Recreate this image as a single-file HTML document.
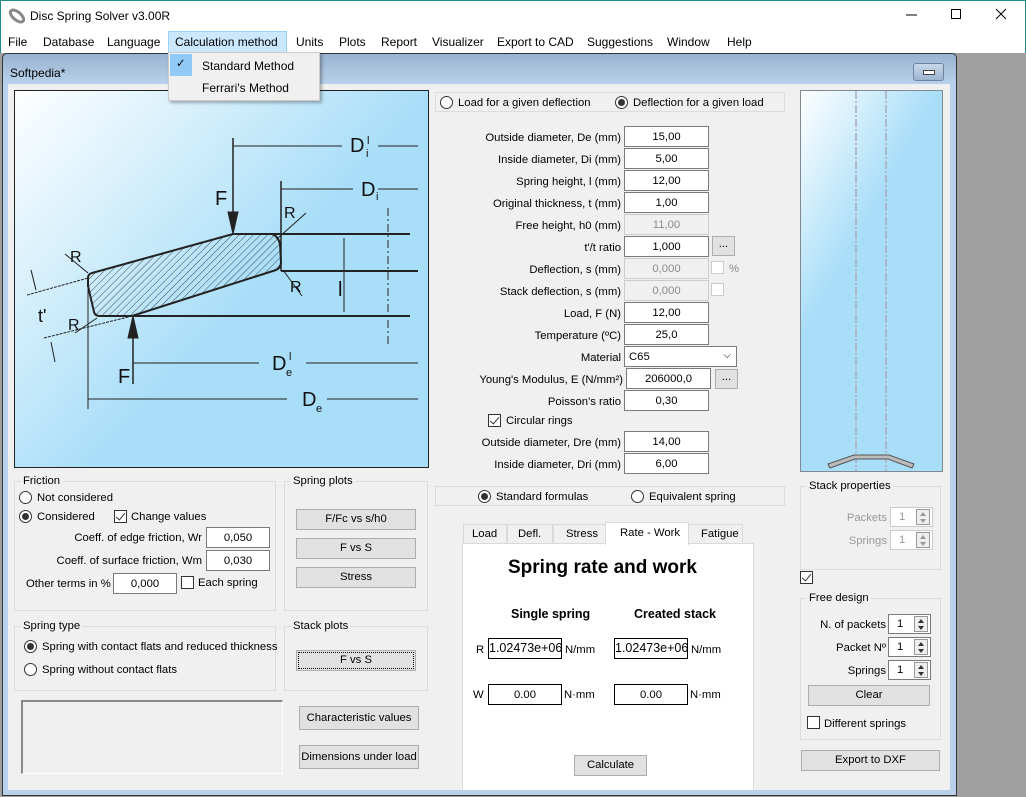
<!DOCTYPE html>
<html><head><meta charset="utf-8"><style>
*{box-sizing:border-box;margin:0;padding:0}
body{width:1026px;height:797px;position:relative;overflow:hidden;background:#a0a0a0;font-family:"Liberation Sans",sans-serif;font-size:11.3px;color:#000}
.a{position:absolute}
.t{position:absolute;white-space:nowrap;line-height:14px}
.r{text-align:right}
.in{position:absolute;background:#fff;border:1px solid #7a7a7a;height:21px;text-align:center;line-height:20px;white-space:nowrap}
.dis{background:#f0f0f0;border-color:#ccc;color:#8a8a8a}
.btn{position:absolute;background:#e1e1e1;border:1px solid #adadad;text-align:center;line-height:18px;height:21px;white-space:nowrap}
.grp{position:absolute;border:1px solid #dcdcdc}
.gl{position:absolute;top:-8px;left:6px;background:#f0f0f0;padding:0 2px;line-height:14px;white-space:nowrap}
.rad{position:absolute;width:13px;height:13px;border:1px solid #333;border-radius:50%;background:#fff}
.rad.on::after{content:"";position:absolute;left:2px;top:2px;width:7px;height:7px;border-radius:50%;background:#333}
.chk{position:absolute;width:13px;height:13px;border:1px solid #333;background:#fff}
.chk.on::after{content:"";position:absolute;left:3px;top:0px;width:4px;height:8px;border:solid #333;border-width:0 1.5px 1.5px 0;transform:rotate(40deg)}
.spin{position:absolute;width:43px;height:20px;background:#fff;border:1px solid #7a7a7a;line-height:18px;padding-left:8px}
.spin i{position:absolute;right:2px;top:1px;width:14px;height:16px;border:1px solid #999;background:#eee}
.spin i::before{content:"";position:absolute;left:3px;top:2px;border:3px solid transparent;border-bottom:4px solid #333;border-top:0}
.spin i::after{content:"";position:absolute;left:3px;top:9px;border:3px solid transparent;border-top:4px solid #333;border-bottom:0}
.spin.d{color:#999;border-color:#ccc}
.spin.d i::before{border-bottom-color:#999}.spin.d i::after{border-top-color:#999}
</style></head><body>
<div class="a" style="left:0;top:0;width:1026px;height:53px;background:#fff;border:1px solid #1e8c8c;border-bottom:none"></div>
<svg class="a" style="left:8px;top:7px" width="18" height="18"><ellipse cx="9" cy="9" rx="8" ry="4" transform="rotate(40 9 9)" fill="none" stroke="#888" stroke-width="3"/></svg>
<div class="t" style="left:30px;top:9px;font-size:12px">Disc Spring Solver v3.00R</div>
<svg class="a" style="left:900px;top:5px" width="120" height="20"><line x1="6" y1="10" x2="17" y2="10" stroke="#000"/><rect x="51.5" y="4.5" width="9" height="9" fill="none" stroke="#000"/><path d="M96 4L106 14M106 4L96 14" stroke="#000"/></svg>
<div class="a" style="left:168px;top:31px;width:119px;height:22px;background:#cce8ff;border:1px solid #99d1ff"></div>
<div class="t" style="top:35px;left:8px;font-size:12px">File</div>
<div class="t" style="top:35px;left:43px;font-size:12px">Database</div>
<div class="t" style="top:35px;left:107px;font-size:12px">Language</div>
<div class="t" style="top:35px;left:175px;font-size:12px">Calculation method</div>
<div class="t" style="top:35px;left:296px;font-size:12px">Units</div>
<div class="t" style="top:35px;left:339px;font-size:12px">Plots</div>
<div class="t" style="top:35px;left:381px;font-size:12px">Report</div>
<div class="t" style="top:35px;left:432px;font-size:12px">Visualizer</div>
<div class="t" style="top:35px;left:497px;font-size:12px">Export to CAD</div>
<div class="t" style="top:35px;left:587px;font-size:12px">Suggestions</div>
<div class="t" style="top:35px;left:667px;font-size:12px">Window</div>
<div class="t" style="top:35px;left:727px;font-size:12px">Help</div>
<div class="a" style="left:2px;top:53px;width:955px;height:743px;background:linear-gradient(#98b3d0,#b9d1ea 30px);border:1px solid #333;border-radius:5px 5px 0 0"></div>
<div class="t" style="left:10px;top:66px;font-size:12px">Softpedia*</div>
<div class="a" style="left:913px;top:63px;width:31px;height:18px;border:1px solid #6d83a0;border-radius:3px;background:linear-gradient(#c8d8ea,#9db4cf)"><div class="a" style="left:9px;top:6px;width:12px;height:5px;background:#fff;border:1px solid #444"></div></div>
<div class="a" style="left:8px;top:84px;width:942px;height:706px;background:#f0f0f0"></div>
<svg class="a" style="left:14px;top:90px" width="416" height="379" viewBox="14 90 416 379">
<defs><linearGradient id="g" x1="0" y1="0" x2="0.6" y2="0.5"><stop offset="0" stop-color="#fff"/><stop offset="1" stop-color="#a9def8"/></linearGradient>
<pattern id="h" width="5" height="5" patternUnits="userSpaceOnUse" patternTransform="rotate(45)"><line x1="0" y1="0" x2="0" y2="5" stroke="#222" stroke-width="0.8"/></pattern></defs>
<rect x="14.5" y="90.5" width="414" height="377" fill="url(#g)" stroke="#222"/>
<g stroke="#222" fill="none" stroke-width="1">
<path d="M88 278 Q88 274 92 273 L233 234 L272 234 Q278 236 280 244 L281 262 Q281 268 276 270 L132 316 L100 316 Q95 316 94 312 L88 286Z" fill="url(#h)" stroke-width="2"/>
<line x1="233" y1="234" x2="410" y2="234" stroke-width="2"/><line x1="281" y1="271" x2="418" y2="271" stroke-width="2"/><line x1="100" y1="316" x2="410" y2="316" stroke-width="2"/>
<line x1="233" y1="138" x2="233" y2="222" stroke-width="1.5"/><path d="M228 212L233 234L238 212Z" fill="#222"/>
<line x1="233" y1="146" x2="342" y2="146"/><line x1="378" y1="146" x2="418" y2="146"/>
<line x1="281" y1="181" x2="281" y2="271" stroke-width="1.5"/>
<line x1="281" y1="189" x2="353" y2="189"/><line x1="378" y1="189" x2="418" y2="189"/>
<line x1="133" y1="330" x2="133" y2="384" stroke-width="1.5"/><path d="M128 338L133 316L138 338Z" fill="#222"/>
<line x1="133" y1="363" x2="259" y2="363"/><line x1="306" y1="363" x2="418" y2="363"/>
<line x1="88" y1="280" x2="88" y2="409"/><line x1="88" y1="399" x2="287" y2="399"/><line x1="327" y1="399" x2="418" y2="399"/>
<line x1="388" y1="208" x2="388" y2="345" stroke-dasharray="8 3 2 3"/>
<line x1="344" y1="238" x2="344" y2="312"/>
<line x1="27" y1="295" x2="88" y2="278" stroke-dasharray="3 1"/><line x1="44" y1="338" x2="132" y2="316" stroke-dasharray="3 1"/>
<line x1="65" y1="254" x2="88" y2="273"/><line x1="75" y1="333" x2="97" y2="318"/><line x1="278" y1="238" x2="306" y2="213"/><line x1="283" y1="270" x2="302" y2="296"/>
<line x1="31" y1="270" x2="36" y2="290"/><line x1="51" y1="342" x2="55" y2="362"/>
</g>
<g font-family="Liberation Sans" font-size="20" fill="#111">
<text x="215" y="205">F</text><text x="118" y="383">F</text>
<text x="350" y="152">D</text><text x="366" y="157" font-size="11">i</text><text x="367" y="144" font-size="11">l</text>
<text x="361" y="196">D</text><text x="376" y="200" font-size="11">i</text>
<text x="272" y="370">D</text><text x="286" y="376" font-size="11">e</text><text x="289" y="360" font-size="11">l</text>
<text x="302" y="406">D</text><text x="316" y="412" font-size="11">e</text>
<text x="338" y="296">l</text><text x="38" y="322" font-size="18">t'</text>
<text x="70" y="262" font-size="16">R</text><text x="68" y="330" font-size="16">R</text><text x="284" y="218" font-size="16">R</text><text x="290" y="292" font-size="16">R</text>
</g></svg>
<div class="a" style="left:168px;top:52px;width:152px;height:49px;background:#f0f0f0;border:1px solid #ccc;box-shadow:2px 2px 3px rgba(0,0,0,.3)"></div>
<div class="a" style="left:170px;top:54px;width:22px;height:22px;background:#91c9f7"></div>
<div class="t" style="left:176px;top:57px">✓</div>
<div class="t" style="left:202px;top:59px;font-size:12px">Standard Method</div>
<div class="t" style="left:202px;top:81px;font-size:12px">Ferrari's Method</div>
<div class="grp" style="left:435px;top:92px;width:350px;height:20px"></div>
<div class="rad" style="left:440px;top:96px"></div><div class="t" style="left:458px;top:96px">Load for a given deflection</div>
<div class="rad on" style="left:615px;top:96px"></div><div class="t" style="left:633px;top:96px">Deflection for a given load</div>
<div class="t r" style="right:405px;top:131px">Outside diameter, De (mm)</div><div class="in" style="left:624px;top:126px;width:85px">15,00</div>
<div class="t r" style="right:405px;top:153px">Inside diameter, Di (mm)</div><div class="in" style="left:624px;top:148px;width:85px">5,00</div>
<div class="t r" style="right:405px;top:175px">Spring height, l (mm)</div><div class="in" style="left:624px;top:170px;width:85px">12,00</div>
<div class="t r" style="right:405px;top:197px">Original thickness, t (mm)</div><div class="in" style="left:624px;top:192px;width:85px">1,00</div>
<div class="t r" style="right:405px;top:219px">Free height, h0 (mm)</div><div class="in dis" style="left:624px;top:214px;width:85px">11,00</div>
<div class="t r" style="right:405px;top:241px">t'/t ratio</div><div class="in" style="left:624px;top:236px;width:85px">1,000</div><div class="btn" style="left:712px;top:236px;width:23px;height:20px;line-height:14px">...</div>
<div class="t r" style="right:405px;top:263px">Deflection, s (mm)</div><div class="in dis" style="left:624px;top:258px;width:85px">0,000</div><div class="chk" style="left:711px;top:261px;border-color:#ccc"></div><div class="t" style="left:729px;top:262px;color:#888">%</div>
<div class="t r" style="right:405px;top:285px">Stack deflection, s (mm)</div><div class="in dis" style="left:624px;top:280px;width:85px">0,000</div><div class="chk" style="left:711px;top:283px;border-color:#ccc"></div>
<div class="t r" style="right:405px;top:307px">Load, F (N)</div><div class="in" style="left:624px;top:302px;width:85px">12,00</div>
<div class="t r" style="right:405px;top:329px">Temperature (ºC)</div><div class="in" style="left:624px;top:324px;width:85px">25,0</div>
<div class="t r" style="right:405px;top:351px">Material</div><div class="in" style="left:624px;top:346px;width:113px;text-align:left;padding-left:4px">C65<span style="position:absolute;right:5px;top:-1px;font-size:10px">⌵</span></div>
<div class="t r" style="right:403px;top:373px">Young's Modulus, E (N/mm²)</div><div class="in" style="left:626px;top:368px;width:85px">206000,0</div><div class="btn" style="left:715px;top:369px;width:23px;height:20px;line-height:14px">...</div>
<div class="t r" style="right:405px;top:395px">Poisson's ratio</div><div class="in" style="left:624px;top:390px;width:85px">0,30</div>
<div class="chk on" style="left:488px;top:414px"></div><div class="t" style="left:506px;top:414px">Circular rings</div>
<div class="t r" style="right:405px;top:436px">Outside diameter, Dre (mm)</div><div class="in" style="left:624px;top:431px;width:85px">14,00</div>
<div class="t r" style="right:405px;top:458px">Inside diameter, Dri (mm)</div><div class="in" style="left:624px;top:453px;width:85px">6,00</div>
<div class="grp" style="left:435px;top:486px;width:350px;height:20px"></div>
<div class="rad on" style="left:478px;top:490px"></div><div class="t" style="left:496px;top:490px">Standard formulas</div>
<div class="rad" style="left:631px;top:490px"></div><div class="t" style="left:649px;top:490px">Equivalent spring</div>
<div class="a" style="left:462px;top:543px;width:292px;height:247px;background:#fff;border:1px solid #d9d9d9;border-bottom:none"></div>
<div class="a" style="left:463px;top:524px;width:44px;height:20px;border:1px solid #d9d9d9;background:#f0f0f0"></div><div class="t" style="left:472px;top:527px">Load</div>
<div class="a" style="left:507px;top:524px;width:46px;height:20px;border:1px solid #d9d9d9;background:#f0f0f0"></div><div class="t" style="left:518px;top:527px">Defl.</div>
<div class="a" style="left:553px;top:524px;width:53px;height:20px;border:1px solid #d9d9d9;background:#f0f0f0"></div><div class="t" style="left:566px;top:527px">Stress</div>
<div class="a" style="left:688px;top:524px;width:55px;height:20px;border:1px solid #d9d9d9;background:#f0f0f0"></div><div class="t" style="left:701px;top:527px">Fatigue</div>
<div class="a" style="left:605px;top:522px;width:84px;height:23px;border:1px solid #d9d9d9;border-bottom:none;background:#fff"></div><div class="t" style="left:620px;top:526px">Rate - Work</div>
<div class="t" style="left:508px;top:558px;font-size:19px;font-weight:bold;line-height:20px">Spring rate and work</div>
<div class="t" style="left:511px;top:607px;font-weight:bold;font-size:12.5px">Single spring</div>
<div class="t" style="left:634px;top:607px;font-weight:bold;font-size:12.5px">Created stack</div>
<div class="t" style="left:476px;top:643px">R</div>
<div class="in" style="left:488px;top:638px;width:74px;border-color:#000;font-size:12.5px;line-height:18px;overflow:hidden">1.02473e+06</div><div class="t" style="left:565px;top:643px">N/mm</div>
<div class="in" style="left:614px;top:638px;width:74px;border-color:#000;font-size:12.5px;line-height:18px;overflow:hidden">1.02473e+06</div><div class="t" style="left:691px;top:643px">N/mm</div>
<div class="t" style="left:473px;top:688px">W</div>
<div class="in" style="left:488px;top:684px;width:74px;border-color:#000">0.00</div><div class="t" style="left:564px;top:688px">N·mm</div>
<div class="in" style="left:614px;top:684px;width:74px;border-color:#000">0.00</div><div class="t" style="left:690px;top:688px">N·mm</div>
<div class="btn" style="left:574px;top:755px;width:73px">Calculate</div>
<div class="grp" style="left:14px;top:481px;width:262px;height:130px"><span class="gl">Friction</span></div>
<div class="rad" style="left:19px;top:491px"></div><div class="t" style="left:37px;top:491px">Not considered</div>
<div class="rad on" style="left:19px;top:510px"></div><div class="t" style="left:37px;top:510px">Considered</div>
<div class="chk on" style="left:114px;top:510px"></div><div class="t" style="left:131px;top:510px">Change values</div>
<div class="t r" style="right:824px;top:531px">Coeff. of edge friction, Wr</div><div class="in" style="left:206px;top:527px;width:64px">0,050</div>
<div class="t r" style="right:824px;top:554px">Coeff. of surface friction, Wm</div><div class="in" style="left:206px;top:550px;width:64px">0,030</div>
<div class="t" style="left:26px;top:577px">Other terms in %</div><div class="in" style="left:113px;top:573px;width:64px">0,000</div>
<div class="chk" style="left:181px;top:576px"></div><div class="t" style="left:198px;top:576px">Each spring</div>
<div class="grp" style="left:284px;top:481px;width:144px;height:130px"><span class="gl">Spring plots</span></div>
<div class="btn" style="left:296px;top:509px;width:120px">F/Fc vs s/h0</div>
<div class="btn" style="left:296px;top:538px;width:120px">F vs S</div>
<div class="btn" style="left:296px;top:567px;width:120px">Stress</div>
<div class="grp" style="left:14px;top:626px;width:262px;height:65px"><span class="gl">Spring type</span></div>
<div class="rad on" style="left:24px;top:640px"></div><div class="t" style="left:42px;top:640px">Spring with contact flats and reduced thickness</div>
<div class="rad" style="left:24px;top:663px"></div><div class="t" style="left:42px;top:663px">Spring without contact flats</div>
<div class="grp" style="left:284px;top:626px;width:144px;height:65px"><span class="gl">Stack plots</span></div>
<div class="btn" style="left:296px;top:650px;width:120px;outline:1px dotted #000;outline-offset:-3px">F vs S</div>
<div class="a" style="left:21px;top:700px;width:262px;height:74px;border:1px solid;border-color:#888 #fff #fff #888;border-width:2px 1px 1px 2px"></div>
<div class="btn" style="left:299px;top:706px;width:120px;height:24px;line-height:22px">Characteristic values</div>
<div class="btn" style="left:299px;top:745px;width:120px;height:24px;line-height:22px">Dimensions under load</div>
<svg class="a" style="left:800px;top:90px" width="143" height="383">
<defs><linearGradient id="g2" x1="0" y1="0" x2="0.3" y2="0.45"><stop offset="0" stop-color="#fff"/><stop offset="1" stop-color="#a9def8"/></linearGradient></defs>
<rect x="0.5" y="0.5" width="142" height="381" fill="url(#g2)" stroke="#808890"/>
<line x1="56" y1="1" x2="56" y2="381" stroke="#aab" stroke-width="1.5" stroke-dasharray="8 2 2 2"/><line x1="86" y1="1" x2="86" y2="381" stroke="#aab" stroke-width="1.5" stroke-dasharray="8 2 2 2"/>
<path d="M28 374L54 365L89 365L114 374L112 378L88 369L55 369L30 378Z" fill="#bbb" stroke="#555"/>
</svg>
<div class="grp" style="left:800px;top:486px;width:141px;height:84px"><span class="gl">Stack properties</span></div>
<div class="t r" style="right:139px;top:511px;color:#999">Packets</div><div class="spin d" style="left:890px;top:507px">1<i></i></div>
<div class="t r" style="right:139px;top:534px;color:#999">Springs</div><div class="spin d" style="left:890px;top:530px">1<i></i></div>
<div class="chk on" style="left:800px;top:571px"></div>
<div class="grp" style="left:800px;top:598px;width:141px;height:142px"><span class="gl">Free design</span></div>
<div class="t r" style="right:140px;top:618px">N. of packets</div><div class="spin" style="left:888px;top:614px">1<i></i></div>
<div class="t r" style="right:140px;top:641px">Packet Nº</div><div class="spin" style="left:888px;top:637px">1<i></i></div>
<div class="t r" style="right:140px;top:664px">Springs</div><div class="spin" style="left:888px;top:660px">1<i></i></div>
<div class="btn" style="left:808px;top:685px;width:122px">Clear</div>
<div class="chk" style="left:807px;top:716px"></div><div class="t" style="left:824px;top:717px">Different springs</div>
<div class="btn" style="left:801px;top:750px;width:139px">Export to DXF</div>
</body></html>
